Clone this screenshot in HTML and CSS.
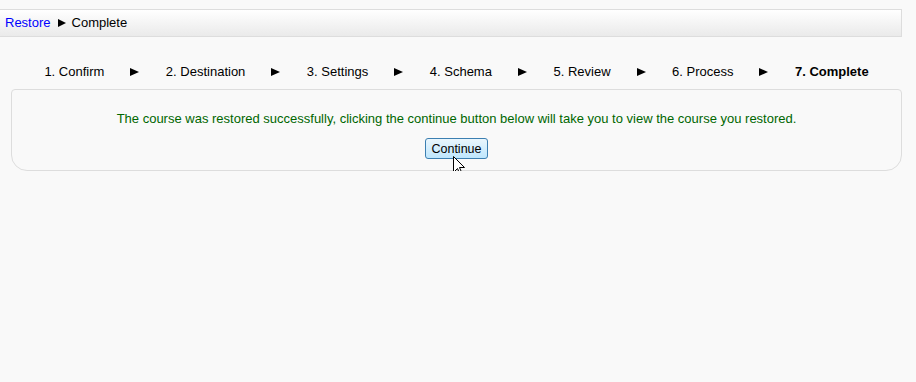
FILE: index.html
```html
<!DOCTYPE html>
<html lang="en">
<head>
  <meta charset="UTF-8" />
  <title>Restore - Complete</title>
  <link rel="stylesheet" href="styles.css">
</head>
<body>
  <div class="navbar">
    <a href="#" class="crumb-link">Restore</a>
    <span class="arrow small"></span>
    <span>Complete</span>
  </div>

  <!-- Restore progress -->
  <div class="steps">
    <span class="step">1. Confirm</span><span class="arrow"></span>
    <span class="step">2. Destination</span><span class="arrow"></span>
    <span class="step">3. Settings</span><span class="arrow"></span>
    <span class="step">4. Schema</span><span class="arrow"></span>
    <span class="step">5. Review</span><span class="arrow"></span>
    <span class="step">6. Process</span><span class="arrow"></span>
    <span class="step current">7. Complete</span>
  </div>

  <div class="box">
    <p class="notify">The course was restored successfully, clicking the continue button below will take you to view the course you restored.</p>
    <div class="buttons">
      <span class="btn-wrap">
        <button class="hover">Continue</button>
        <svg class="cursor" width="13" height="21" viewBox="0 0 13 21">
          <path d="M0.5 0.5 L0.5 16.5 L4.5 12.5 L7.5 19.5 L9.5 18.5 L6.5 11.5 L11.5 11.5 Z" fill="#fff" stroke="#000" stroke-width="1" stroke-linejoin="miter"/>
        </svg>
      </span>
    </div>
  </div>
</body>
</html>
```

FILE: styles.css
```css
body {
  margin: 0;
  font-family: "Liberation Sans", Arial, sans-serif;
  font-size: 13px;
  background: #f9f9f9;
  color: #000;
}
.navbar {
  margin: 9px 14px 0 0;
  height: 26px;
  line-height: 26px;
  padding-left: 5px;
  border: 1px solid #dddddd;
  border-left: none;
  background: linear-gradient(#ffffff, #eaeaea);
  display: flex;
  align-items: center;
}
.crumb-link {
  color: #0000ff;
  text-decoration: none;
}
.arrow {
  display: inline-block;
  width: 0;
  height: 0;
  border-left: 9px solid #000;
  border-top: 4.5px solid transparent;
  border-bottom: 4.5px solid transparent;
  margin: 0 26.5px 0 26px;
}
.arrow.small {
  border-left-width: 8px;
  border-top-width: 4px;
  border-bottom-width: 4px;
  margin: 0 6px 0 7px;
}
.steps {
  margin: 26px 14px 0 11px;
  height: 18px;
  line-height: 18px;
  display: flex;
  justify-content: center;
  align-items: center;
}
.step.current {
  font-weight: bold;
}
.box {
  margin: 8px 14px 0 11px;
  border: 1px solid #dddddd;
  border-radius: 4px 4px 16px 16px;
  padding: 21px 0 11px;
  text-align: center;
}
.notify {
  margin: 0;
  font-size: 13px;
  line-height: 16px;
  color: #006600;
}
.buttons {
  margin-top: 11px;
  height: 21px;
}
.btn-wrap {
  position: relative;
  display: inline-block;
}
button {
  font-family: "Liberation Sans", Arial, sans-serif;
  font-size: 12.5px;
  height: 21px;
  padding: 0 5px;
  border: 1px solid #3c7fb1;
  border-radius: 3px;
  color: #000;
  background: linear-gradient(#eaf6fd, #bee6fd);
  cursor: pointer;
}
.cursor {
  position: absolute;
  left: 28px;
  top: 18px;
}
```
